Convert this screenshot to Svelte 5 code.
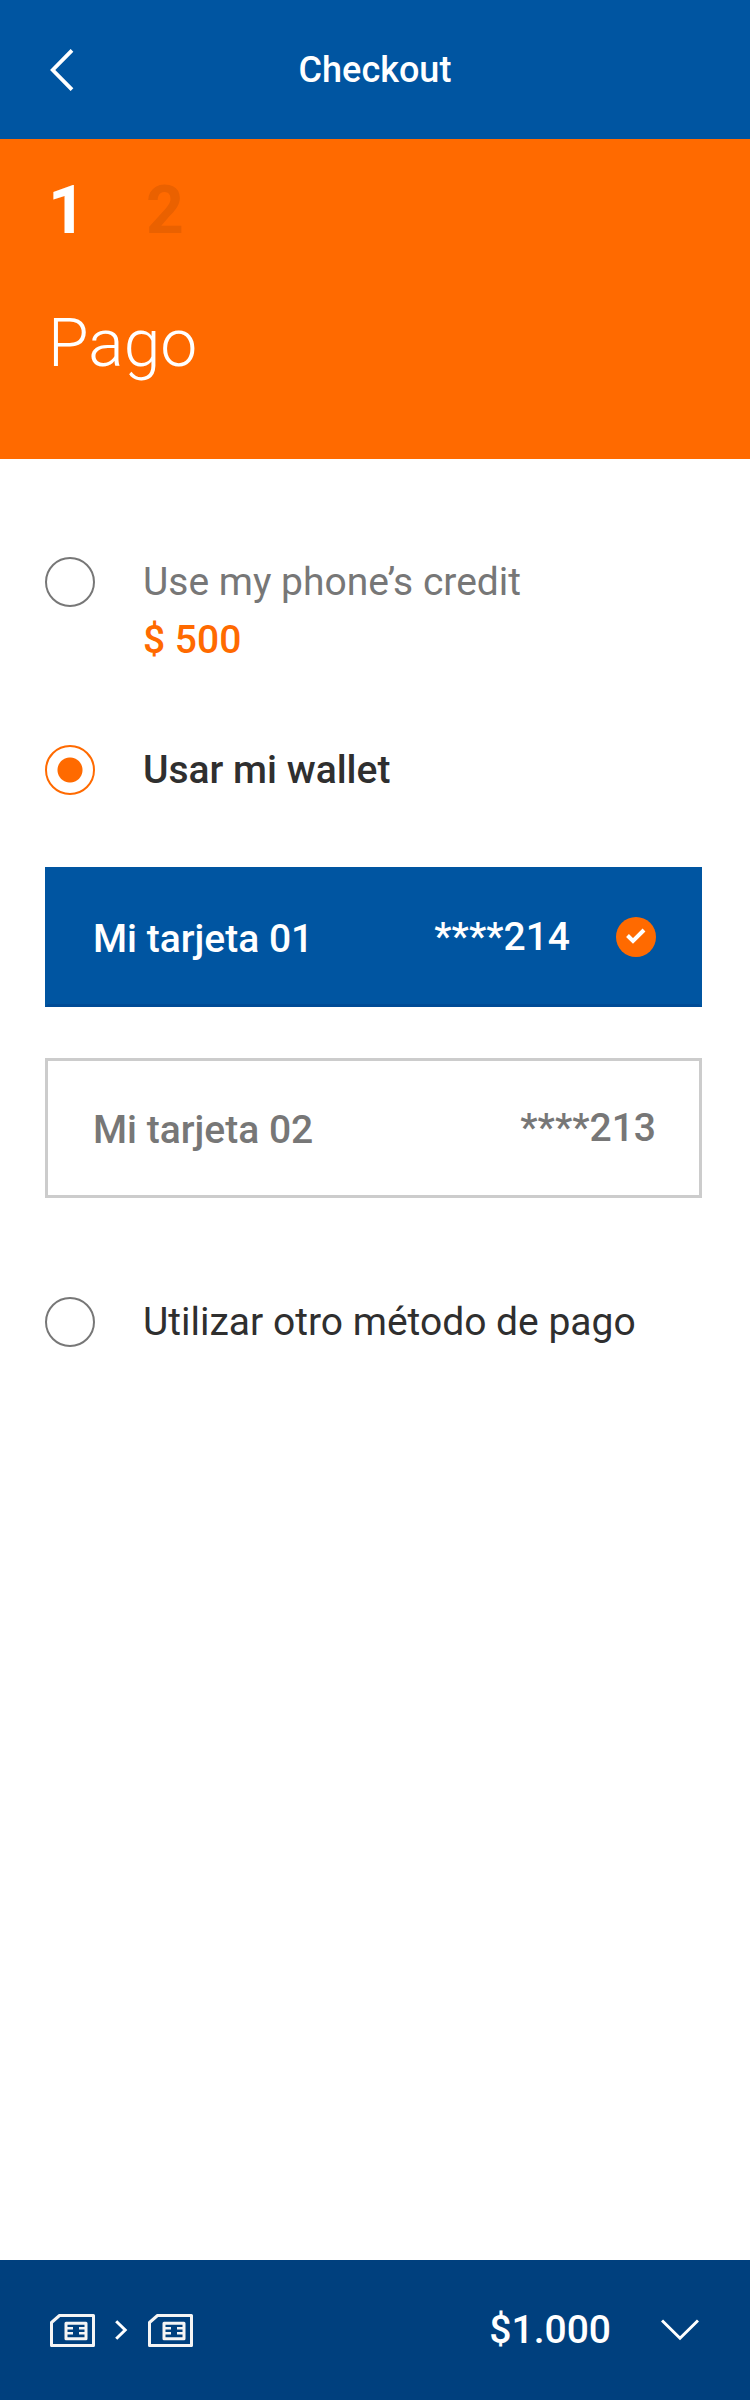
<script>
  let method = $state('wallet');
  let card = $state('01');
  const cards = [
    { id: '01', name: 'Mi tarjeta 01', digits: '****214' },
    { id: '02', name: 'Mi tarjeta 02', digits: '****213' }
  ];
</script>

{#snippet sim()}
  <svg class="sim" viewBox="0 0 45 33" width="45" height="33" fill="none" stroke="#f5f5f5" aria-hidden="true">
    <path d="M9.5 1.5H43.5V31.5H1.5V8.5Z" stroke-width="3" stroke-linejoin="round" />
    <rect x="16" y="9.3" width="20" height="15.4" stroke-width="3" stroke-linejoin="round" />
    <path d="M17 14.2h6M17 19.2h6M29 14.2h6M29 19.2h6" stroke-width="2.4" />
  </svg>
{/snippet}

<div class="page">
  <header class="bar">
    <button class="icon-button" aria-label="Volver">
      <svg viewBox="0 0 24 42" width="24" height="42" fill="none" stroke="#fff" stroke-width="3.8" aria-hidden="true">
        <path d="M22 1.3 2.7 21 22 40.7" />
      </svg>
    </button>
    <h1>Checkout</h1>
  </header>

  <section class="hero">
    <ol class="steps">
      <li aria-current="step">1</li>
      <li class="pending">2</li>
    </ol>
    <h2>Pago</h2>
  </section>

  <main>
    <label class="option muted">
      <input type="radio" name="method" value="credit" bind:group={method} />
      <span>Use my phone’s credit<strong>$ 500</strong></span>
    </label>

    <label class="option selected">
      <input type="radio" name="method" value="wallet" bind:group={method} />
      <span>Usar mi wallet</span>
    </label>

    <div class="cards">
      {#each cards as c (c.id)}
        <button class="card" class:active={card === c.id} aria-pressed={card === c.id} onclick={() => (card = c.id)}>
          <span class="name">{c.name}</span>
          <span>{c.digits}</span>
          {#if card === c.id}
            <svg class="check" viewBox="0 0 40 40" width="40" height="40" aria-hidden="true">
              <circle cx="20" cy="20" r="20" fill="#ff6a00" />
              <path d="M11.5 18.5 17 24 28 13" fill="none" stroke="#fff" stroke-width="4" />
            </svg>
          {/if}
        </button>
      {/each}
    </div>

    <label class="option">
      <input type="radio" name="method" value="other" bind:group={method} />
      <span>Utilizar otro método de pago</span>
    </label>
  </main>

  <footer>
    {@render sim()}
    <svg class="arrow" viewBox="0 0 13 20" width="13" height="20" fill="none" stroke="#fff" stroke-width="3" aria-hidden="true">
      <path d="M1.2 1.2 10.2 10 1.2 18.8" />
    </svg>
    {@render sim()}
    <span class="total">$1.000</span>
    <button class="icon-button" aria-label="Ver detalle">
      <svg viewBox="0 0 38 22" width="38" height="22" fill="none" stroke="#fff" stroke-width="3" aria-hidden="true">
        <path d="M1 1.5 19 19.2 37 1.5" />
      </svg>
    </button>
  </footer>
</div>

<style>
  :global(body) {
    margin: 0;
    background: #fff;
  }
  .page {
    display: flex;
    flex-direction: column;
    min-height: 100vh;
    font-family: Roboto, 'Liberation Sans', sans-serif;
    font-size: 39px;
    line-height: 58px;
    color: #2f2f2f;
  }
  button {
    font: inherit;
    color: inherit;
    cursor: pointer;
  }
  .icon-button {
    display: flex;
    padding: 0;
    border: 0;
    background: none;
  }
  .bar {
    display: grid;
    grid-template-columns: 1fr auto 1fr;
    align-items: center;
    box-sizing: border-box;
    min-height: 139px;
    padding: 0 50px;
    background: #0055a1;
    color: #fff;
  }
  h1 {
    margin: 0;
    font-size: 36px;
    font-weight: 500;
  }
  .hero {
    padding: 40px 48px 62px;
    background: #ff6a00;
    color: #fff;
  }
  .steps {
    display: flex;
    gap: 60px;
    margin: 0;
    padding: 0;
    list-style: none;
    font-size: 66px;
    line-height: 64px;
    font-weight: 700;
  }
  .pending {
    color: #ea6100;
  }
  h2 {
    margin: 48px 0 0;
    font-size: 66px;
    line-height: 106px;
    font-weight: 300;
  }
  main {
    padding: 94px 48px 60px 45px;
  }
  .option {
    display: flex;
    align-items: flex-start;
    gap: 48px;
  }
  .option + .option {
    margin-top: 72px;
  }
  .muted {
    color: #777;
  }
  .selected {
    font-weight: 500;
  }
  strong {
    display: block;
    font-weight: 500;
    color: #ff6a00;
  }
  input {
    appearance: none;
    flex: none;
    box-sizing: border-box;
    width: 50px;
    height: 50px;
    margin: 4px 0;
    border: 2px solid #777;
    border-radius: 50%;
    background: #fff;
  }
  input:checked {
    border-color: #ff6a00;
    background: radial-gradient(circle, #ff6a00 12px, #fff 13px);
  }
  .cards {
    display: grid;
    gap: 51px;
    margin: 68px 0 95px;
  }
  .card {
    display: flex;
    align-items: center;
    box-sizing: border-box;
    min-height: 140px;
    padding: 0 43px 0 45px;
    border: 3px solid #ccc;
    background: #fff;
    color: #777;
    font-weight: 500;
    text-align: left;
  }
  .card.active {
    border-color: #0055a1;
    border-bottom-color: #004b96;
    background: #0055a1;
    color: #fff;
  }
  .name {
    flex: 1;
    padding-top: 4px;
  }
  .check {
    margin-left: 46px;
  }
  footer {
    display: flex;
    align-items: center;
    box-sizing: border-box;
    min-height: 140px;
    margin-top: auto;
    padding: 0 51px 0 50px;
    background: #00407e;
    color: #fff;
    font-weight: 500;
  }
  .arrow {
    margin: 0 20px;
  }
  .total {
    margin-left: auto;
    margin-right: 50px;
  }
</style>
